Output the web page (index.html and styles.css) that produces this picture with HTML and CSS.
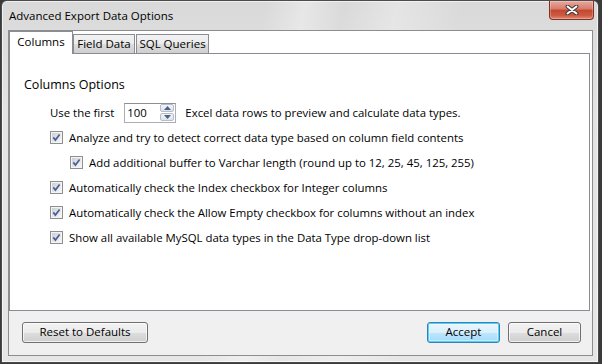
FILE: index.html
```html
<!DOCTYPE html>
<html lang="en">
<head>
    <meta charset="UTF-8">
    <meta name="viewport" content="width=device-width, initial-scale=1.0">
	<link rel="stylesheet" href="styles.css">
</head>
<body>
	<div class="window">
		<div class="titlebar">
			<span class="title">Advanced Export Data Options</span>
			<div class="close">
				<svg width="14" height="10" viewBox="0 0 14 10">
					<path d="M2.5 1.5 L11.5 8.5 M11.5 1.5 L2.5 8.5" stroke="#3b3b3b" stroke-width="4" stroke-linecap="round"/>
					<path d="M2.5 1.5 L11.5 8.5 M11.5 1.5 L2.5 8.5" stroke="#fff" stroke-width="2" stroke-linecap="round"/>
				</svg>
			</div>
		</div>
		<div class="client">
			<div class="tabs">
				<div class="tab active">Columns</div>
				<div class="tab tab-field">Field Data</div>
				<div class="tab tab-sql">SQL Queries</div>
			</div>
			<div class="panel">
				<div class="section">Columns Options</div>
				<div class="options">
					<div class="row">
						<span>Use the first</span>
						<span class="spin">
							<span class="spin-value">100</span>
							<span class="spin-btns">
								<span class="spin-btn"><svg width="7" height="4" viewBox="0 0 7 4"><path d="M0 4 L3.5 0 L7 4Z" fill="#4d6185"/></svg></span>
								<span class="spin-btn"><svg width="7" height="4" viewBox="0 0 7 4"><path d="M0 0 L3.5 4 L7 0Z" fill="#4d6185"/></svg></span>
							</span>
						</span>
						<span>Excel data rows to preview and calculate data types.</span>
					</div>
					<div class="row">
						<svg class="cb" width="13" height="13" viewBox="0 0 13 13"><use href="#check"/></svg>
						<span>Analyze and try to detect correct data type based on column field contents</span>
					</div>
					<div class="row sub">
						<svg class="cb" width="13" height="13" viewBox="0 0 13 13"><use href="#check"/></svg>
						<span>Add additional buffer to Varchar length (round up to 12, 25, 45, 125, 255)</span>
					</div>
					<div class="row">
						<svg class="cb" width="13" height="13" viewBox="0 0 13 13"><use href="#check"/></svg>
						<span>Automatically check the Index checkbox for Integer columns</span>
					</div>
					<div class="row">
						<svg class="cb" width="13" height="13" viewBox="0 0 13 13"><use href="#check"/></svg>
						<span>Automatically check the Allow Empty checkbox for columns without an index</span>
					</div>
					<div class="row">
						<svg class="cb" width="13" height="13" viewBox="0 0 13 13"><use href="#check"/></svg>
						<span>Show all available MySQL data types in the Data Type drop-down list</span>
					</div>
				</div>
			</div>
			<div class="footer">
				<div class="btn btn-reset">Reset to Defaults</div>
				<div class="btn btn-default">Accept</div>
				<div class="btn">Cancel</div>
			</div>
		</div>
	</div>

	<svg width="0" height="0" style="position:absolute">
		<defs>
			<linearGradient id="cbfill" x1="0" y1="0" x2="1" y2="1">
				<stop offset="0" stop-color="#cbcfd5"/>
				<stop offset="1" stop-color="#f7f7f7"/>
			</linearGradient>
			<g id="check">
				<rect x="0.5" y="0.5" width="12" height="12" fill="#f4f4f4" stroke="#8e8f8f"/>
				<rect x="2" y="2" width="9" height="9" fill="url(#cbfill)"/>
				<path d="M3.3 6.4 L5.4 9 L9.6 3.4" fill="none" stroke="#4a5f97" stroke-width="1.7"/>
			</g>
		</defs>
	</svg>
</body>
</html>
```

FILE: styles.css
```css
html, body {
	margin: 0;
	padding: 0;
}
body {
	background: #3a3a3a;
	font-family: 'Open Sans', sans-serif;
	font-size: 11.4px;
	color: #000;
	width: 602px;
	height: 364px;
	overflow: hidden;
}
.window {
	box-sizing: border-box;
	margin-left: 1px;
	width: 598px;
	height: 363px;
	border: 1px solid #4c4c4c;
	border-radius: 6px 6px 0 0;
	background:
		linear-gradient(100deg, rgba(255,255,255,0) 40%, rgba(255,255,255,0.35) 46%, rgba(255,255,255,0) 52%, rgba(255,255,255,0.3) 60%, rgba(255,255,255,0) 70%),
		linear-gradient(#d9d9d9, #e3e3e3 30%, #e6e6e6);
	box-shadow: inset 0 0 0 1px rgba(255,255,255,0.6);
	display: flex;
	flex-direction: column;
}
.titlebar {
	height: 29px;
	display: flex;
	align-items: flex-start;
}
.title {
	font-size: 11.5px;
	line-height: 16px;
	padding: 7px 0 0 7px;
	color: #000;
}
.close {
	margin-left: auto;
	margin-right: 4px;
	width: 45px;
	height: 19px;
	box-sizing: border-box;
	border: 1px solid #7d3228;
	border-top: none;
	border-radius: 0 0 4px 4px;
	background: linear-gradient(#e8a99e, #d77a69 45%, #c4462f 50%, #cd5a43 80%, #e08a72);
	display: flex;
	align-items: center;
	justify-content: center;
	box-shadow: inset 0 0 0 1px rgba(255,255,255,0.25);
}
.client {
	box-sizing: border-box;
	margin-left: 6px;
	width: 585px;
	height: 326px;
	border: 1px solid #8d8d8d;
	background: #fff;
	display: flex;
	flex-direction: column;
}
.tabs {
	height: 22px;
	display: flex;
	align-items: flex-end;
}
.tab {
	box-sizing: border-box;
	height: 19px;
	line-height: 17px;
	border: 1px solid #898c95;
	border-bottom: none;
	background: linear-gradient(#f2f2f2, #ebebeb 50%, #dddddd 51%, #cfcfcf);
	text-align: center;
	font-size: 11.5px;
}
.tab.active {
	position: relative;
	z-index: 1;
	width: 64px;
	height: 23px;
	margin-bottom: -1px;
	line-height: 20px;
	background: #fff;
}
.tab-field {
	width: 62px;
}
.tab-sql {
	width: 73px;
	margin-left: 1px;
}
.panel {
	box-sizing: border-box;
	width: 581px;
	height: 258px;
	border: 1px solid #898c95;
	background: #fff;
	padding: 23px 0 0 14px;
}
.section {
	font-size: 12.5px;
	line-height: 16px;
}
.options {
	margin: 7px 0 0 26px;
}
.row {
	height: 25px;
	display: flex;
	align-items: center;
}
.row.sub {
	padding-left: 20px;
}
.cb {
	flex: none;
	margin-right: 6px;
}
.spin {
	box-sizing: border-box;
	margin: 0 9px 0 10px;
	width: 52px;
	height: 20px;
	border: 1px solid #abadb3;
	border-top-color: #8e8f8f;
	display: flex;
	align-items: center;
	justify-content: space-between;
	padding: 0 1px 0 2px;
}
.spin-btns {
	display: flex;
	flex-direction: column;
	gap: 1px;
}
.spin-btn {
	box-sizing: border-box;
	width: 14px;
	height: 8px;
	border: 1px solid #b7bcc6;
	border-radius: 2px;
	background: linear-gradient(#f1f4f9, #dde3ec);
	display: flex;
	align-items: center;
	justify-content: center;
}
.footer {
	flex: 1;
	background: #f0f0f0;
	display: flex;
	align-items: flex-start;
	gap: 8px;
	padding: 11px 11px 0 13px;
}
.btn {
	box-sizing: border-box;
	width: 73px;
	height: 21px;
	border: 1px solid #707070;
	border-radius: 3px;
	background: linear-gradient(#f2f2f2, #ebebeb 50%, #dddddd 51%, #cfcfcf);
	box-shadow: inset 0 0 0 1px rgba(255,255,255,0.7);
	text-align: center;
	line-height: 18px;
	font-size: 11.5px;
}
.btn-reset {
	width: 126px;
	margin-right: auto;
}
.btn-default {
	border-color: #3c7fb1;
	box-shadow: inset 0 0 0 1px #48d4fb, inset 0 0 0 2px rgba(255,255,255,0.4);
	background: linear-gradient(#eaf6fd, #d9f0fc 50%, #bee6fd 51%, #a7d9f5);
}
```
